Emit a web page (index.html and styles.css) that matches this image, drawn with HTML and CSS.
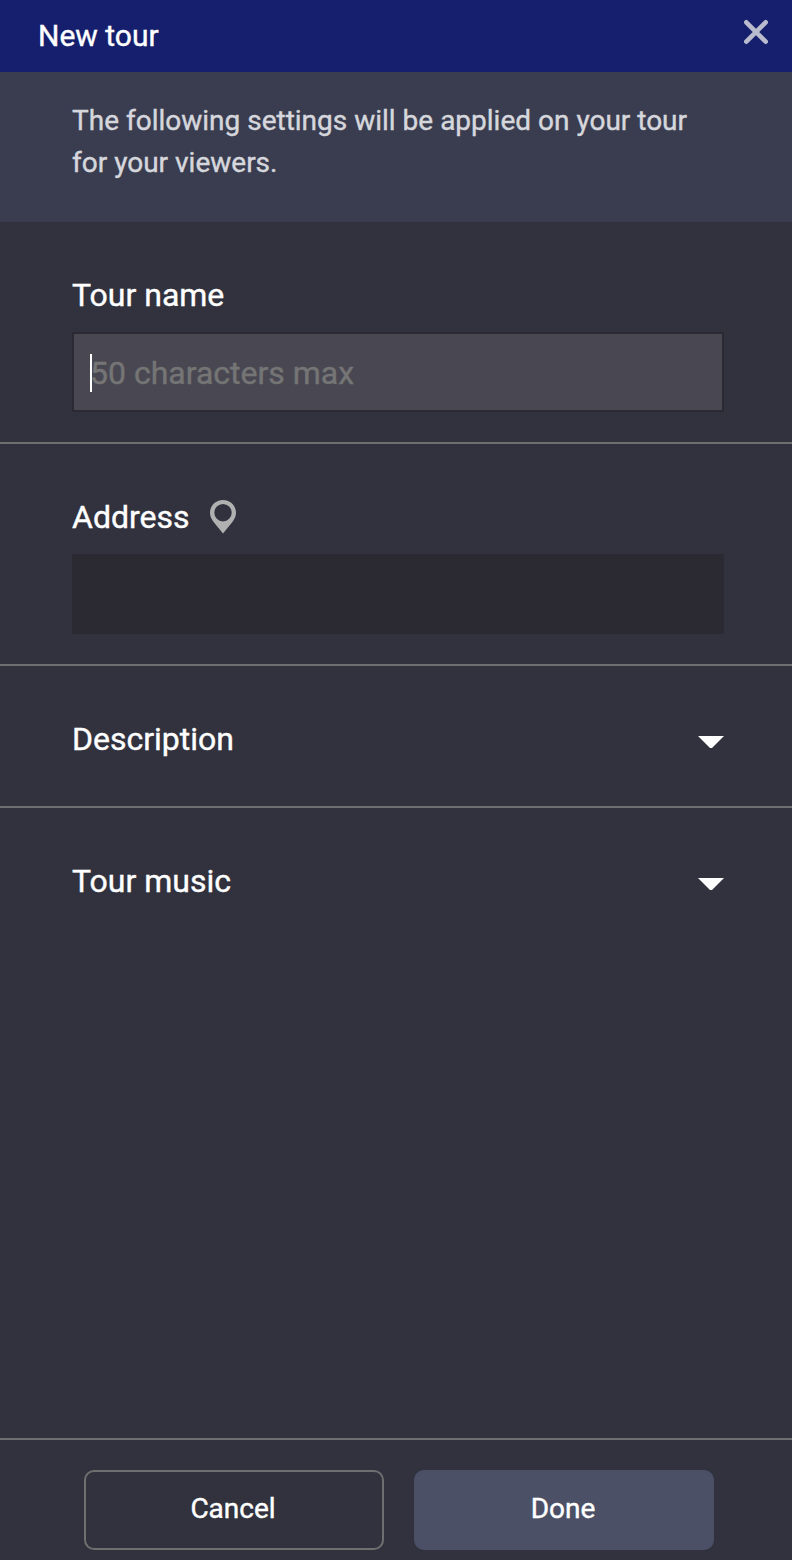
FILE: index.html
```html
<!doctype html>
<html>
<head>
<meta charset="utf-8">
<title>New tour</title>
<link rel="stylesheet" href="styles.css">
</head>

<body>
<div class="panel">
	<div class="header">
		<h1>New tour</h1>
		<a href="javascript:;" class="close"><svg width="26" height="26" viewBox="0 0 26 26"><path d="M3.300 3.300L22.700 22.700M22.700 3.300L3.300 22.700"/></svg></a>
	</div>
	<p class="intro">The following settings will be applied on your tour for your viewers.</p>
	<div class="section field">
		<label class="title">Tour name</label>
		<div class="input active"><span class="caret"></span><span class="placeholder">50 characters max</span></div>
	</div>
	<div class="section field">
		<label class="title">Address <svg class="pin" width="26" height="34" viewBox="0 0 26 34"><path fill-rule="evenodd" d="M13 0C5.700 0 0 5.700 0 12.800C0 16.500 1.600 19.400 3.800 22.300L13 33.500L22.200 22.300C24.400 19.400 26 16.500 26 12.800C26 5.700 20.300 0 13 0ZM13 4A8.700 8.700 0 1 1 13 21.400A8.700 8.700 0 1 1 13 4Z"/></svg></label>
		<div class="input"></div>
	</div>
	<div class="section row">
		<span class="title">Description</span>
		<svg class="arrow" width="26" height="12" viewBox="0 0 26 12"><path d="M0 0H26L14 12H12Z"/></svg>
	</div>
	<div class="section row last">
		<span class="title">Tour music</span>
		<svg class="arrow" width="26" height="12" viewBox="0 0 26 12"><path d="M0 0H26L14 12H12Z"/></svg>
	</div>
	<div class="footer">
		<a href="javascript:;" class="btn cancel">Cancel</a>
		<a href="javascript:;" class="btn done">Done</a>
	</div>
</div>
</body>
</html>
```
FILE: styles.css
```css
*{margin:0; padding:0; box-sizing:border-box;}
body{background:#31323e; font-family:Roboto,"Liberation Sans",sans-serif; color:#fff; -webkit-text-stroke:.4px;}
a{text-decoration:none; color:#fff;}
svg{display:block;}
.panel{width:792px; height:1560px; display:flex; flex-direction:column; overflow:hidden;}
.header{height:72px; background:#151f6d; padding:0 23px 0 38px; display:flex; justify-content:space-between;}
.header h1{font-size:30px; font-weight:400; line-height:71px;}
.close{margin-top:19px;}
.close path{stroke:#b9bccd; stroke-width:4.6; stroke-linecap:round; fill:none;}
.intro{height:150px; background:#3a3d50; padding:28px 72px 0; font-size:28px; line-height:42px; color:#d6d7dc;}
.section{border-bottom:2px solid #6f6f70; padding:54px 68px 0 72px;}
.field{height:222px;}
.title{display:flex; align-items:flex-start; font-size:32px; line-height:38px;}
.pin{margin:2px 0 0 20px; fill:#b1b1b1;}
.input{width:652px; height:80px; margin-top:18px; background:#2b2a33; border:2px solid #2b2a33; display:flex; align-items:center; padding:2px 0 0 16px; font-size:32px;}
.active{background:#494852;}
.caret{width:2px; height:38px; background:#fff; margin-right:-2px;}
.placeholder{color:#757575;}
.row{height:142px; display:flex; justify-content:space-between; align-items:flex-start;}
.arrow{fill:#fff; margin-top:16px;}
.last{border-bottom:0;}
.footer{height:122px; margin-top:auto; border-top:2px solid #6f6f70; padding:30px 78px 0 84px; display:flex; gap:30px;}
.btn{width:300px; height:80px; border:2px solid #4b5066; border-radius:10px; padding-right:2px; font-size:28px; line-height:74px; text-align:center;}
.cancel{border-color:#6f6f70;}
.done{background:#4b5066;}
```
